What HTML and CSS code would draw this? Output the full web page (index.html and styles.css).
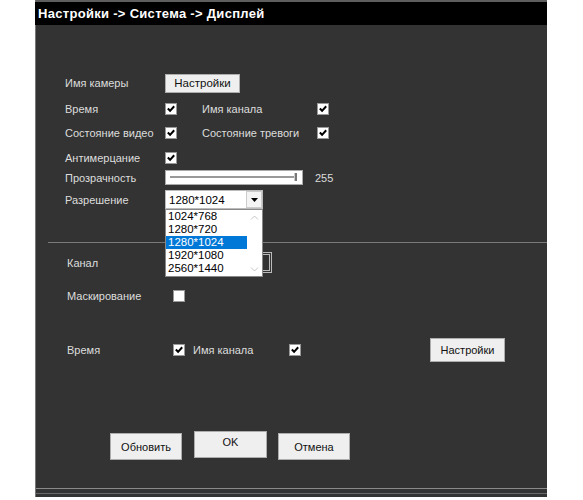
FILE: index.html
```html
<!DOCTYPE html>
<html lang="ru">

<head>
    <meta charset="UTF-8">
    <title>Настройки - Дисплей</title>
    <link rel="stylesheet" href="styles.css">
</head>

<body>
    <div class="window">
        <div class="title">Настройки -&gt; Система -&gt; Дисплей</div>

        <div class="section top">
            <div class="row r-cam">
                <span class="lbl">Имя камеры</span>
                <button class="btn btn-cam">Настройки</button>
            </div>
            <div class="row r-chk">
                <span class="lbl">Время</span>
                <span class="cb on"><svg viewBox="0 0 11 11"><path d="M2 5 L4.5 7.5 L9 2.5"/></svg></span>
                <span class="lbl2">Имя канала</span>
                <span class="cb on"><svg viewBox="0 0 11 11"><path d="M2 5 L4.5 7.5 L9 2.5"/></svg></span>
            </div>
            <div class="row r-chk">
                <span class="lbl">Состояние видео</span>
                <span class="cb on"><svg viewBox="0 0 11 11"><path d="M2 5 L4.5 7.5 L9 2.5"/></svg></span>
                <span class="lbl2">Состояние тревоги</span>
                <span class="cb on"><svg viewBox="0 0 11 11"><path d="M2 5 L4.5 7.5 L9 2.5"/></svg></span>
            </div>
            <div class="row r-chk r-flick">
                <span class="lbl">Антимерцание</span>
                <span class="cb on"><svg viewBox="0 0 11 11"><path d="M2 5 L4.5 7.5 L9 2.5"/></svg></span>
            </div>
            <div class="row r-alpha">
                <span class="lbl">Прозрачность</span>
                <div class="slider">
                    <div class="track"></div>
                    <div class="thumb"></div>
                </div>
                <span class="val">255</span>
            </div>
            <div class="row r-res">
                <span class="lbl">Разрешение</span>
                <div class="select res">
                    <span class="sel-text">1280*1024</span>
                    <span class="sel-arrow"><svg viewBox="0 0 7 4"><path d="M0 0 H7 L3.5 4 Z"/></svg></span>
                    <div class="options">
                        <ul>
                            <li>1024*768</li>
                            <li>1280*720</li>
                            <li class="active">1280*1024</li>
                            <li>1920*1080</li>
                            <li>2560*1440</li>
                        </ul>
                        <div class="scroll">
                            <svg viewBox="0 0 9 5"><path d="M1 4.5 L4.5 1 L8 4.5"/></svg>
                            <svg viewBox="0 0 9 5"><path d="M1 0.5 L4.5 4 L8 0.5"/></svg>
                        </div>
                    </div>
                </div>
            </div>
        </div>

        <div class="sep"></div>

        <div class="section mid">
            <div class="row r-chan">
                <span class="lbl">Канал</span>
                <div class="select chan"><span class="chan-btn"></span></div>
            </div>
            <div class="row r-mask">
                <span class="lbl">Маскирование</span>
                <span class="cb"></span>
            </div>
        </div>

        <div class="section low">
            <div class="row r-time">
                <span class="lbl">Время</span>
                <span class="cb on"><svg viewBox="0 0 11 11"><path d="M2 5 L4.5 7.5 L9 2.5"/></svg></span>
                <span class="lbl3">Имя канала</span>
                <span class="cb on"><svg viewBox="0 0 11 11"><path d="M2 5 L4.5 7.5 L9 2.5"/></svg></span>
                <button class="btn btn-set">Настройки</button>
            </div>
        </div>

        <div class="actions">
            <button class="btn btn-act">Обновить</button>
            <button class="btn btn-act btn-ok">OK</button>
            <button class="btn btn-act">Отмена</button>
        </div>

        <div class="footer"></div>
    </div>
</body>

</html>
```

FILE: styles.css
```css
body {
    margin: 0;
    padding: 0;
    background-color: #fff;
    font-family: "Liberation Sans", Arial, sans-serif;
    font-size: 11px;
}

.window {
    margin-left: 35px;
    width: 511px;
    height: 495px;
    background-color: #333;
    border-left: 1px solid #777;
    border-top: 2px solid #5e5e5e;
    display: flex;
    flex-direction: column;
}

.title {
    height: 23px;
    line-height: 23px;
    background-color: #000;
    color: #fff;
    font-weight: bold;
    font-size: 13px;
    letter-spacing: 0.3px;
    padding-left: 3px;
    margin-left: -1px;
}

.row {
    display: flex;
    align-items: center;
    color: #ddd;
}

.lbl {
    width: 100px;
    flex-shrink: 0;
}

/* top block */

.top {
    padding-top: 48px;
    padding-left: 29px;
}

.r-cam {
    height: 20px;
    margin-bottom: 4px;
}

.r-chk {
    height: 24px;
}

.r-flick {
    height: 25px;
}

.lbl2 {
    width: 115px;
    margin-left: 25px;
}

.cb {
    box-sizing: border-box;
    width: 12px;
    height: 12px;
    background-color: #fff;
    border: 1px solid #999;
    display: inline-flex;
    flex-shrink: 0;
}

.cb svg {
    width: 10px;
    height: 10px;
    fill: none;
    stroke: #000;
    stroke-width: 2.2;
}

.r-alpha {
    height: 15px;
}

.slider {
    position: relative;
    box-sizing: border-box;
    width: 138px;
    height: 15px;
    background-color: #fff;
    border: 1px solid #aaa;
}

.track {
    margin: 5px 0 0 4px;
    width: 127px;
    height: 2px;
    background-color: #999;
}

.thumb {
    position: absolute;
    right: 5px;
    top: 2px;
    width: 2px;
    height: 8px;
    background-color: #777;
    border-left: 1px solid #ccc;
}

.val {
    margin-left: 12px;
}

.r-res {
    height: 21px;
    margin-top: 4px;
}

.select {
    position: relative;
    box-sizing: border-box;
    display: flex;
    align-items: center;
}

.res {
    width: 98px;
    height: 19px;
    background-color: #fff;
    border: 1px solid #bbb;
    color: #000;
    font-size: 11.5px;
}

.sel-text {
    padding-left: 3px;
    flex: 1;
}

.sel-arrow {
    box-sizing: border-box;
    width: 16px;
    height: 17px;
    border: 1px solid #ccc;
    background-color: #f4f4f4;
    display: flex;
    align-items: center;
    justify-content: center;
}

.sel-arrow svg {
    width: 7px;
    height: 4px;
    fill: #000;
}

.options {
    position: absolute;
    z-index: 2;
    left: -1px;
    top: 18px;
    box-sizing: border-box;
    width: 98px;
    height: 68px;
    background-color: #fff;
    border: 1px solid #888;
    display: flex;
}

.options ul {
    list-style: none;
    margin: 0;
    padding: 0;
    width: 81px;
}

.options li {
    height: 13px;
    line-height: 13px;
    padding-left: 2px;
}

.options li.active {
    background-color: #0078d7;
    color: #fff;
}

.scroll {
    flex: 1;
    display: flex;
    flex-direction: column;
    justify-content: space-between;
    align-items: center;
    padding: 5px 0 4px;
}

.scroll svg {
    width: 9px;
    height: 5px;
    fill: none;
    stroke: #c4c4c4;
    stroke-width: 1;
}

.sep {
    margin: 32px 0 0 12px;
    height: 1px;
    background-color: #7a7a7a;
}

/* channel block */

.mid,
.low {
    padding-left: 31px;
}

.mid .lbl,
.low .lbl {
    width: 106px;
}

.r-chan {
    height: 21px;
    margin-top: 9px;
}

.chan {
    width: 99px;
    height: 21px;
    border: 1px solid #bbb;
    justify-content: flex-end;
}

.chan-btn {
    box-sizing: border-box;
    width: 8px;
    height: 17px;
    margin-right: 1px;
    border: 1px solid #bbb;
}

.r-mask {
    height: 14px;
    margin-top: 16px;
}

.r-time {
    height: 24px;
    margin-top: 35px;
}

.lbl3 {
    width: 96px;
    margin-left: 8px;
}

/* buttons */

.btn {
    box-sizing: border-box;
    font-family: "Liberation Sans", Arial, sans-serif;
    font-size: 11px;
    color: #111;
    background-color: #efefef;
    border: 1px solid #adadad;
    padding: 0;
    cursor: pointer;
}

.btn-cam {
    width: 75px;
    height: 19px;
    font-size: 11.5px;
}

.btn-set {
    width: 75px;
    height: 24px;
    margin-left: 129px;
}

.actions {
    display: flex;
    padding-left: 74px;
    margin-top: 71px;
}

.btn-act {
    width: 72px;
    height: 27px;
    margin-right: 12px;
}

.btn-ok {
    width: 73px;
    margin-top: -2px;
    margin-right: 11px;
    padding-bottom: 6px;
}

.footer {
    margin-top: auto;
    margin-bottom: 3px;
    height: 4px;
    border-top: 1px solid #8a8a8a;
    border-bottom: 1px solid #6a6a6a;
}
```
